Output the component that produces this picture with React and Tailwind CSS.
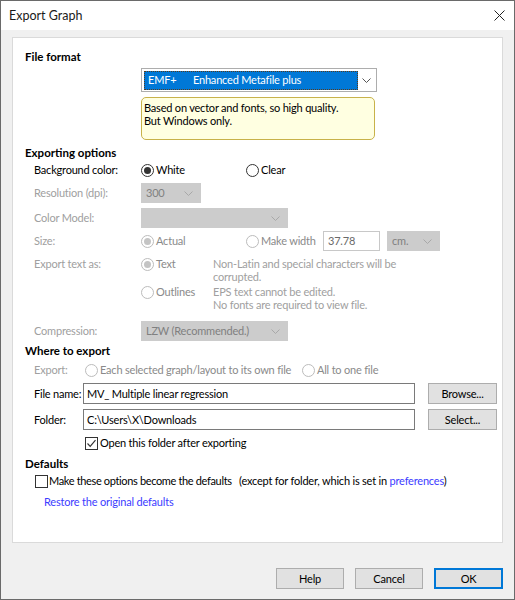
import React from "react";

const F = { fontFamily: 'Lato, "Noto Sans", sans-serif' };

function Chevron({ color = "#9a9a9a" }) {
  return (
    <svg width="9" height="5" viewBox="0 0 9 5" className="shrink-0">
      <polyline points="0.5,0.5 4.5,4.5 8.5,0.5" fill="none" stroke={color} strokeWidth="1" />
    </svg>
  );
}

function Radio({ checked, disabled }) {
  return (
    <span
      className={
        "w-[13px] h-[13px] rounded-full border bg-white flex items-center justify-center shrink-0 " +
        (disabled ? "border-[#bcbcbc]" : "border-[#333333]")
      }
    >
      {checked && (
        <span className={"w-[7px] h-[7px] rounded-full " + (disabled ? "bg-[#c4c4c4]" : "bg-[#333333]")} />
      )}
    </span>
  );
}

function Check({ checked }) {
  return (
    <span className="w-[13px] h-[13px] border border-[#333333] bg-white flex items-center justify-center shrink-0">
      {checked && (
        <svg width="11" height="11" viewBox="0 0 11 11">
          <polyline points="1.5,5.5 4.2,8.3 9.5,2.2" fill="none" stroke="#333" strokeWidth="1.2" />
        </svg>
      )}
    </span>
  );
}

function DisCombo({ w, text }) {
  return (
    <div className={"h-[20px] bg-[#cccccc] flex items-center justify-between pl-[5px] pr-[8px] text-[#808080] whitespace-nowrap " + w}>
      <span>{text}</span>
      <Chevron color="#a8a8a8" />
    </div>
  );
}

function Button({ children, w, primary }) {
  return (
    <div
      className={
        "h-[21px] bg-[#e1e1e1] flex items-center justify-center text-black " +
        w +
        (primary ? " border-2 border-[#0078d7]" : " border border-[#adadad]")
      }
    >
      {children}
    </div>
  );
}

export default function App() {
  return (
    <div
      style={F}
      className="w-[515px] h-[600px] bg-[#f0f0f0] border border-[#6a6a6a] flex flex-col text-[11px] leading-[16px] tracking-[-0.2px] text-black overflow-hidden whitespace-nowrap"
    >
      {/* Title bar */}
      <div className="h-[29px] bg-white flex items-center justify-between pl-[8px] pr-[8px] shrink-0">
        <span className="text-[12.5px] tracking-normal text-[#1a1a1a]">Export Graph</span>
        <svg width="11" height="11" viewBox="0 0 11 11" className="mr-[1px]">
          <line x1="0.5" y1="0.5" x2="10.5" y2="10.5" stroke="#222" strokeWidth="1" />
          <line x1="10.5" y1="0.5" x2="0.5" y2="10.5" stroke="#222" strokeWidth="1" />
        </svg>
      </div>

      {/* Body */}
      <div className="flex-1 flex flex-col pl-[11px] pr-[11px] pt-[7px]">
        <div className="h-[506px] bg-white border border-[#dadada] flex flex-col pt-[11px]">
          {/* File format */}
          <div className="h-[16px] pl-[12px] font-bold text-[11.5px] tracking-normal">File format</div>
          <div className="mt-[3px] ml-[128px] w-[236px] h-[24px] border border-[#adadad] flex items-center pl-[2px] pr-[5px]">
            <div className="w-[214px] h-[19px] bg-[#0078d7] border border-dotted border-[#5a3a1a] flex items-center text-white pl-[3px]">
              <span className="w-[45px]">EMF+</span>
              <span>Enhanced Metafile plus</span>
            </div>
            <div className="flex-1 flex justify-end">
              <Chevron color="#555" />
            </div>
          </div>
          <div className="mt-[5px] ml-[128px] w-[234px] h-[43px] border border-[#c8b24a] rounded-[5px] bg-[#ffffe1] pl-[2px] pt-[3px] leading-[13px]">
            <div>Based on vector and fonts, so high quality.</div>
            <div>But Windows only.</div>
          </div>

          {/* Exporting options */}
          <div className="mt-[5px] h-[16px] pl-[12px] font-bold text-[11.5px] tracking-normal">Exporting options</div>
          <div className="mt-[1px] h-[16px] pl-[21px] flex items-center">
            <span className="w-[107px]">Background color:</span>
            <div className="w-[105px] flex items-center gap-[2px]">
              <Radio checked />
              <span>White</span>
            </div>
            <div className="flex items-center gap-[2px]">
              <Radio />
              <span>Clear</span>
            </div>
          </div>
          <div className="mt-[5px] h-[20px] pl-[21px] flex items-center text-[#a0a0a0]">
            <span className="w-[107px]">Resolution (dpi):</span>
            <DisCombo w="w-[60px]" text="300" />
          </div>
          <div className="mt-[5px] h-[20px] pl-[21px] flex items-center text-[#a0a0a0]">
            <span className="w-[107px]">Color Model:</span>
            <DisCombo w="w-[147px]" text="" />
          </div>
          <div className="mt-[3px] h-[20px] pl-[21px] flex items-center text-[#a0a0a0]">
            <span className="w-[107px]">Size:</span>
            <div className="w-[105px] flex items-center gap-[2px] text-[#8a8a8a]">
              <Radio checked disabled />
              <span>Actual</span>
            </div>
            <div className="w-[77px] flex items-center gap-[2px] text-[#8a8a8a]">
              <Radio disabled />
              <span>Make width</span>
            </div>
            <div className="w-[57px] h-[20px] border border-[#c8c8c8] bg-white flex items-center pl-[4px] text-[#6a6a6a]">
              37.78
            </div>
            <div className="ml-[7px]">
              <DisCombo w="w-[53px]" text="cm." />
            </div>
          </div>
          <div className="mt-[5px] pl-[21px] flex items-start text-[#a0a0a0]">
            <span className="w-[107px] h-[16px] flex items-center">Export text as:</span>
            <div className="w-[72px] h-[16px] flex items-center gap-[2px] text-[#8a8a8a]">
              <Radio checked disabled />
              <span>Text</span>
            </div>
            <div className="leading-[13px] pt-[1px]">
              <div>Non-Latin and special characters will be</div>
              <div>corrupted.</div>
            </div>
          </div>
          <div className="mt-[1px] pl-[21px] flex items-start text-[#a0a0a0]">
            <span className="w-[107px]" />
            <div className="w-[72px] h-[16px] flex items-center gap-[2px] text-[#8a8a8a]">
              <Radio disabled />
              <span>Outlines</span>
            </div>
            <div className="leading-[13px] pt-[1px]">
              <div>EPS text cannot be edited.</div>
              <div>No fonts are required to view file.</div>
            </div>
          </div>
          <div className="mt-[10px] h-[20px] pl-[21px] flex items-center text-[#a0a0a0]">
            <span className="w-[107px]">Compression:</span>
            <DisCombo w="w-[147px]" text="LZW (Recommended.)" />
          </div>

          {/* Where to export */}
          <div className="mt-[2px] h-[16px] pl-[12px] font-bold text-[11.5px] tracking-normal">Where to export</div>
          <div className="mt-[3px] h-[16px] pl-[21px] flex items-center text-[#a0a0a0]">
            <span className="w-[51px]">Export:</span>
            <div className="w-[217px] flex items-center gap-[2px] text-[#8a8a8a]">
              <Radio disabled />
              <span>Each selected graph/layout to its own file</span>
            </div>
            <div className="flex items-center gap-[2px] text-[#8a8a8a]">
              <Radio disabled />
              <span>All to one file</span>
            </div>
          </div>
          <div className="mt-[5px] h-[21px] pl-[21px] flex items-center">
            <span className="w-[49px]">File name:</span>
            <div className="w-[332px] h-[21px] border border-[#7a7a7a] flex items-center pl-[3px]">
              MV_ Multiple linear regression
            </div>
            <div className="ml-[13px]">
              <Button w="w-[69px]">Browse...</Button>
            </div>
          </div>
          <div className="mt-[5px] h-[21px] pl-[21px] flex items-center">
            <span className="w-[49px]">Folder:</span>
            <div className="w-[332px] h-[21px] border border-[#7a7a7a] flex items-center pl-[3px]">
              C:\Users\X\Downloads
            </div>
            <div className="ml-[13px]">
              <Button w="w-[69px]">Select...</Button>
            </div>
          </div>
          <div className="mt-[5px] h-[16px] pl-[72px] flex items-center gap-[2px]">
            <Check checked />
            <span>Open this folder after exporting</span>
          </div>

          {/* Defaults */}
          <div className="mt-[5px] h-[16px] pl-[12px] font-bold text-[11.5px] tracking-normal">Defaults</div>
          <div className="mt-[1px] h-[16px] pl-[22px] flex items-center">
            <Check />
            <span className="ml-[1px] w-[190px] tracking-[-0.35px]">Make these options become the defaults</span>
            <span>
              (except for folder, which is set in <span className="text-[#3c3cff]">preferences</span>)
            </span>
          </div>
          <div className="mt-[5px] h-[16px] pl-[31px] text-[#3c3cff]">Restore the original defaults</div>
        </div>

        {/* Buttons */}
        <div className="mt-[25px] flex justify-end gap-[11px]">
          <Button w="w-[68px]">Help</Button>
          <Button w="w-[68px]">Cancel</Button>
          <Button w="w-[69px]" primary>
            OK
          </Button>
        </div>
      </div>
    </div>
  );
}
